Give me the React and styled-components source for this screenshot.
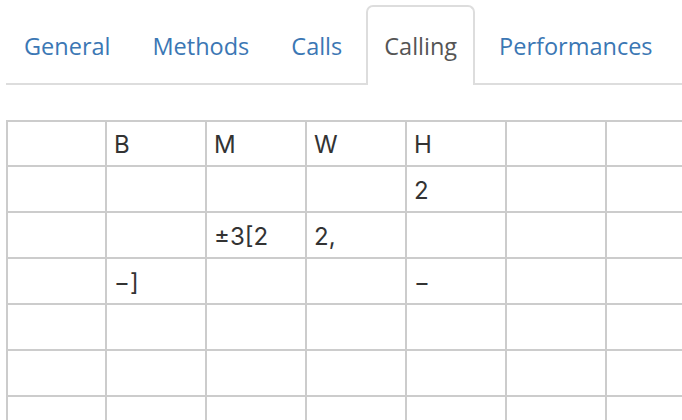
import React from "react";
import styled, { createGlobalStyle } from "styled-components";

const Global = createGlobalStyle`
  html, body { margin: 0; padding: 0; background: #fff; overflow: hidden; }
  body { width: 682px; height: 420px; }
`;

const Page = styled.div`
  padding: 0 0 0 6px;
  width: 676px;
  height: 420px;
  overflow: hidden;
`;

const Nav = styled.ul`
  display: flex;
  gap: 6px;
  list-style: none;
  margin: 0;
  padding: 5px 0 0 0;
  border-bottom: 2px solid #dddddd;
`;

const Tab = styled.li`
  box-sizing: border-box;
  margin-bottom: -2px;
  padding: 2px 16px 0 16px;
  display: flex;
  align-items: center;
  border: 2px solid transparent;
  border-bottom: none;
  border-radius: 7px 7px 0 0;
  font-family: "Open Sans", sans-serif;
  font-size: 23.5px;
  color: ${(p) => (p.$active ? "#555555" : "#3b77b4")};
  ${(p) =>
    p.$active
      ? `border-color: #dddddd; background: #fff; height: 80px; padding-bottom: 2px;`
      : `height: 78px; margin-bottom: 0;`}
`;

const Grid = styled.div`
  margin-top: 35px;
  display: grid;
  grid-template-columns: 99px repeat(7, 100px);
  grid-template-rows: 45px repeat(6, 46px);
  border-top: 2px solid #cccccc;
  border-left: 2px solid #cccccc;
  width: max-content;
`;

const Cell = styled.div`
  box-sizing: border-box;
  border-right: 2px solid #cccccc;
  border-bottom: 2px solid #cccccc;
  padding: 2px 8px 0 7px;
  display: flex;
  align-items: center;
  font-family: Inter, "Liberation Sans", sans-serif;
  font-size: 24px;
  color: #333333;
  white-space: nowrap;
`;

const tabs = ["General", "Methods", "Calls", "Calling", "Performances"];

const rows = [
  ["", "B", "M", "W", "H", "", "", ""],
  ["", "", "", "", "2", "", "", ""],
  ["", "", "±3[2", "2,", "", "", "", ""],
  ["", "−]", "", "", "−", "", "", ""],
  ["", "", "", "", "", "", "", ""],
  ["", "", "", "", "", "", "", ""],
  ["", "", "", "", "", "", "", ""],
];

export default function App() {
  return (
    <Page>
      <Global />
      <Nav>
        {tabs.map((t) => (
          <Tab key={t} $active={t === "Calling"}>
            {t}
          </Tab>
        ))}
      </Nav>
      <Grid>
        {rows.map((r, i) =>
          r.map((c, j) => <Cell key={`${i}-${j}`}>{c}</Cell>)
        )}
      </Grid>
    </Page>
  );
}
